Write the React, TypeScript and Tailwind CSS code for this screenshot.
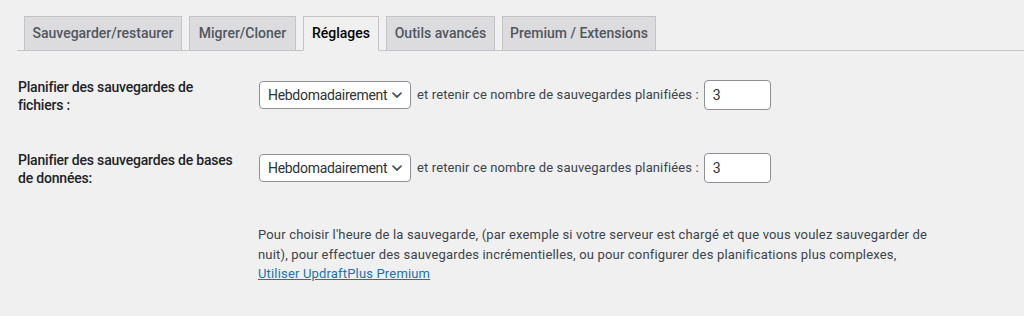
import React from 'react';

const font = { fontFamily: 'Roboto, "Liberation Sans", sans-serif' };

const tabs = [
  { label: 'Sauvegarder/restaurer', w: 'w-[158px]' },
  { label: 'Migrer/Cloner', w: 'w-[107px]' },
  { label: 'Réglages', w: 'w-[76px]', active: true },
  { label: 'Outils avancés', w: 'w-[109px]' },
  { label: 'Premium / Extensions', w: 'w-[154px]' },
];

function Chevron() {
  return (
    <svg className="w-[12px] h-[12px] shrink-0" viewBox="0 0 12 12" fill="none" stroke="#50575e" strokeWidth="1.8" strokeLinecap="round" strokeLinejoin="round">
      <path d="M2 4.2l4 3.8 4-3.8" />
    </svg>
  );
}

function ScheduleRow({ label }: { label: React.ReactNode }) {
  return (
    <div className="flex items-start">
      <div className="w-[259px] shrink-0 pl-[18px] whitespace-nowrap text-[14px] leading-[18px] font-medium tracking-[-0.2px] text-[#1d2327]">{label}</div>
      <div className="flex items-center shrink-0 mt-[2px] h-[30px]">
        <div className="w-[152px] shrink-0 h-[28px] flex items-center justify-between pl-[8px] pr-[7px] bg-white border border-[#8c8f94] rounded-[4px] text-[14px] tracking-[-0.3px] text-[#2c3338] whitespace-nowrap">
          <span>Hebdomadairement</span>
          <Chevron />
        </div>
        <span className="ml-[6px] text-[13px] tracking-[0.12px] text-[#3c434a] whitespace-nowrap">et retenir ce nombre de sauvegardes planifiées :</span>
        <div className="ml-[5px] w-[67px] shrink-0 h-[30px] flex items-center pl-[8px] bg-white border border-[#8c8f94] rounded-[4px] text-[14px] text-[#2c3338]">
          3
        </div>
      </div>
    </div>
  );
}

export default function App() {
  return (
    <div className="w-[1024px] h-[316px] bg-[#f0f0f1] overflow-hidden" style={font}>
      <div className="pt-[16px] pl-[17px]">
        <div className="flex items-end gap-[7px] pl-[7px] border-b border-[#c3c4c7] h-[35px]">
          {tabs.map((t) => (
            <div
              key={t.label}
              className={`${t.w} h-[35px] -mb-px flex items-center justify-center border text-[14px] font-medium ${
                t.active
                  ? 'bg-[#f0f0f1] border-[#c3c4c7] border-b-[#f0f0f1] text-black'
                  : 'bg-[#dcdcde] border-[#c3c4c7] text-[#50575e]'
              }`}
            >
              {t.label}
            </div>
          ))}
        </div>
      </div>

      <div className="mt-[27px] flex flex-col gap-[37px]">
        <ScheduleRow label={<>Planifier des sauvegardes de<br />fichiers :</>} />
        <ScheduleRow label={<>Planifier des sauvegardes de bases<br />de données:</>} />
      </div>

      <p className="mt-[38px] ml-[258px] text-[13px] leading-[19.5px] tracking-[0.17px] text-[#3c434a]">
        Pour choisir l'heure de la sauvegarde, (par exemple si votre serveur est chargé et que vous voulez sauvegarder de
        <br />
        nuit), pour effectuer des sauvegardes incrémentielles, ou pour configurer des planifications plus complexes,
        <br />
        <a href="#" className="text-[#2271b1] underline">Utiliser UpdraftPlus Premium</a>
      </p>
    </div>
  );
}
